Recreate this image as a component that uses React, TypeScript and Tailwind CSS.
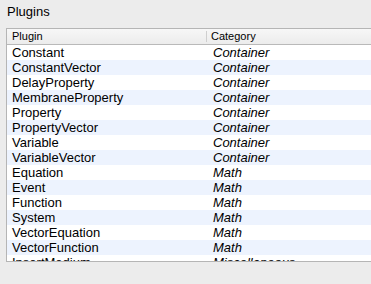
import React from "react";

const rows: [string, string][] = [
  ["Constant", "Container"],
  ["ConstantVector", "Container"],
  ["DelayProperty", "Container"],
  ["MembraneProperty", "Container"],
  ["Property", "Container"],
  ["PropertyVector", "Container"],
  ["Variable", "Container"],
  ["VariableVector", "Container"],
  ["Equation", "Math"],
  ["Event", "Math"],
  ["Function", "Math"],
  ["System", "Math"],
  ["VectorEquation", "Math"],
  ["VectorFunction", "Math"],
  ["InsertMedium", "Miscellaneous"],
];

export default function App() {
  return (
    <div
      className="w-[371px] h-[284px] bg-[#ececec] overflow-hidden text-black"
      style={{ fontFamily: '"Liberation Sans", Arial, sans-serif' }}
    >
      <div className="pl-[7px] pt-[4px] h-[28px] text-[13px] leading-[16px]">Plugins</div>
      <div className="ml-[6px] h-[234px] border-t border-l border-b border-[#b5b5b5] bg-white overflow-hidden">
        <div className="flex h-[16px] bg-gradient-to-b from-[#f7f7f7] to-[#ececec] border-b border-[#b9b9b9] text-[11px] leading-[14px]">
          <div className="w-[199px] pl-[5px]">Plugin</div>
          <div className="w-px my-[2px] bg-[#cfcfcf]" />
          <div className="pl-[4px]">Category</div>
        </div>
        {rows.map(([name, cat], i) => (
          <div
            key={name}
            className={`flex h-[15px] text-[13px] leading-[15px] ${i % 2 === 1 ? "bg-[#edf3fe]" : "bg-white"}`}
          >
            <div className="w-[200px] pl-[5px] whitespace-nowrap">{name}</div>
            <div className="pl-[6px] italic whitespace-nowrap">{cat}</div>
          </div>
        ))}
      </div>
    </div>
  );
}
